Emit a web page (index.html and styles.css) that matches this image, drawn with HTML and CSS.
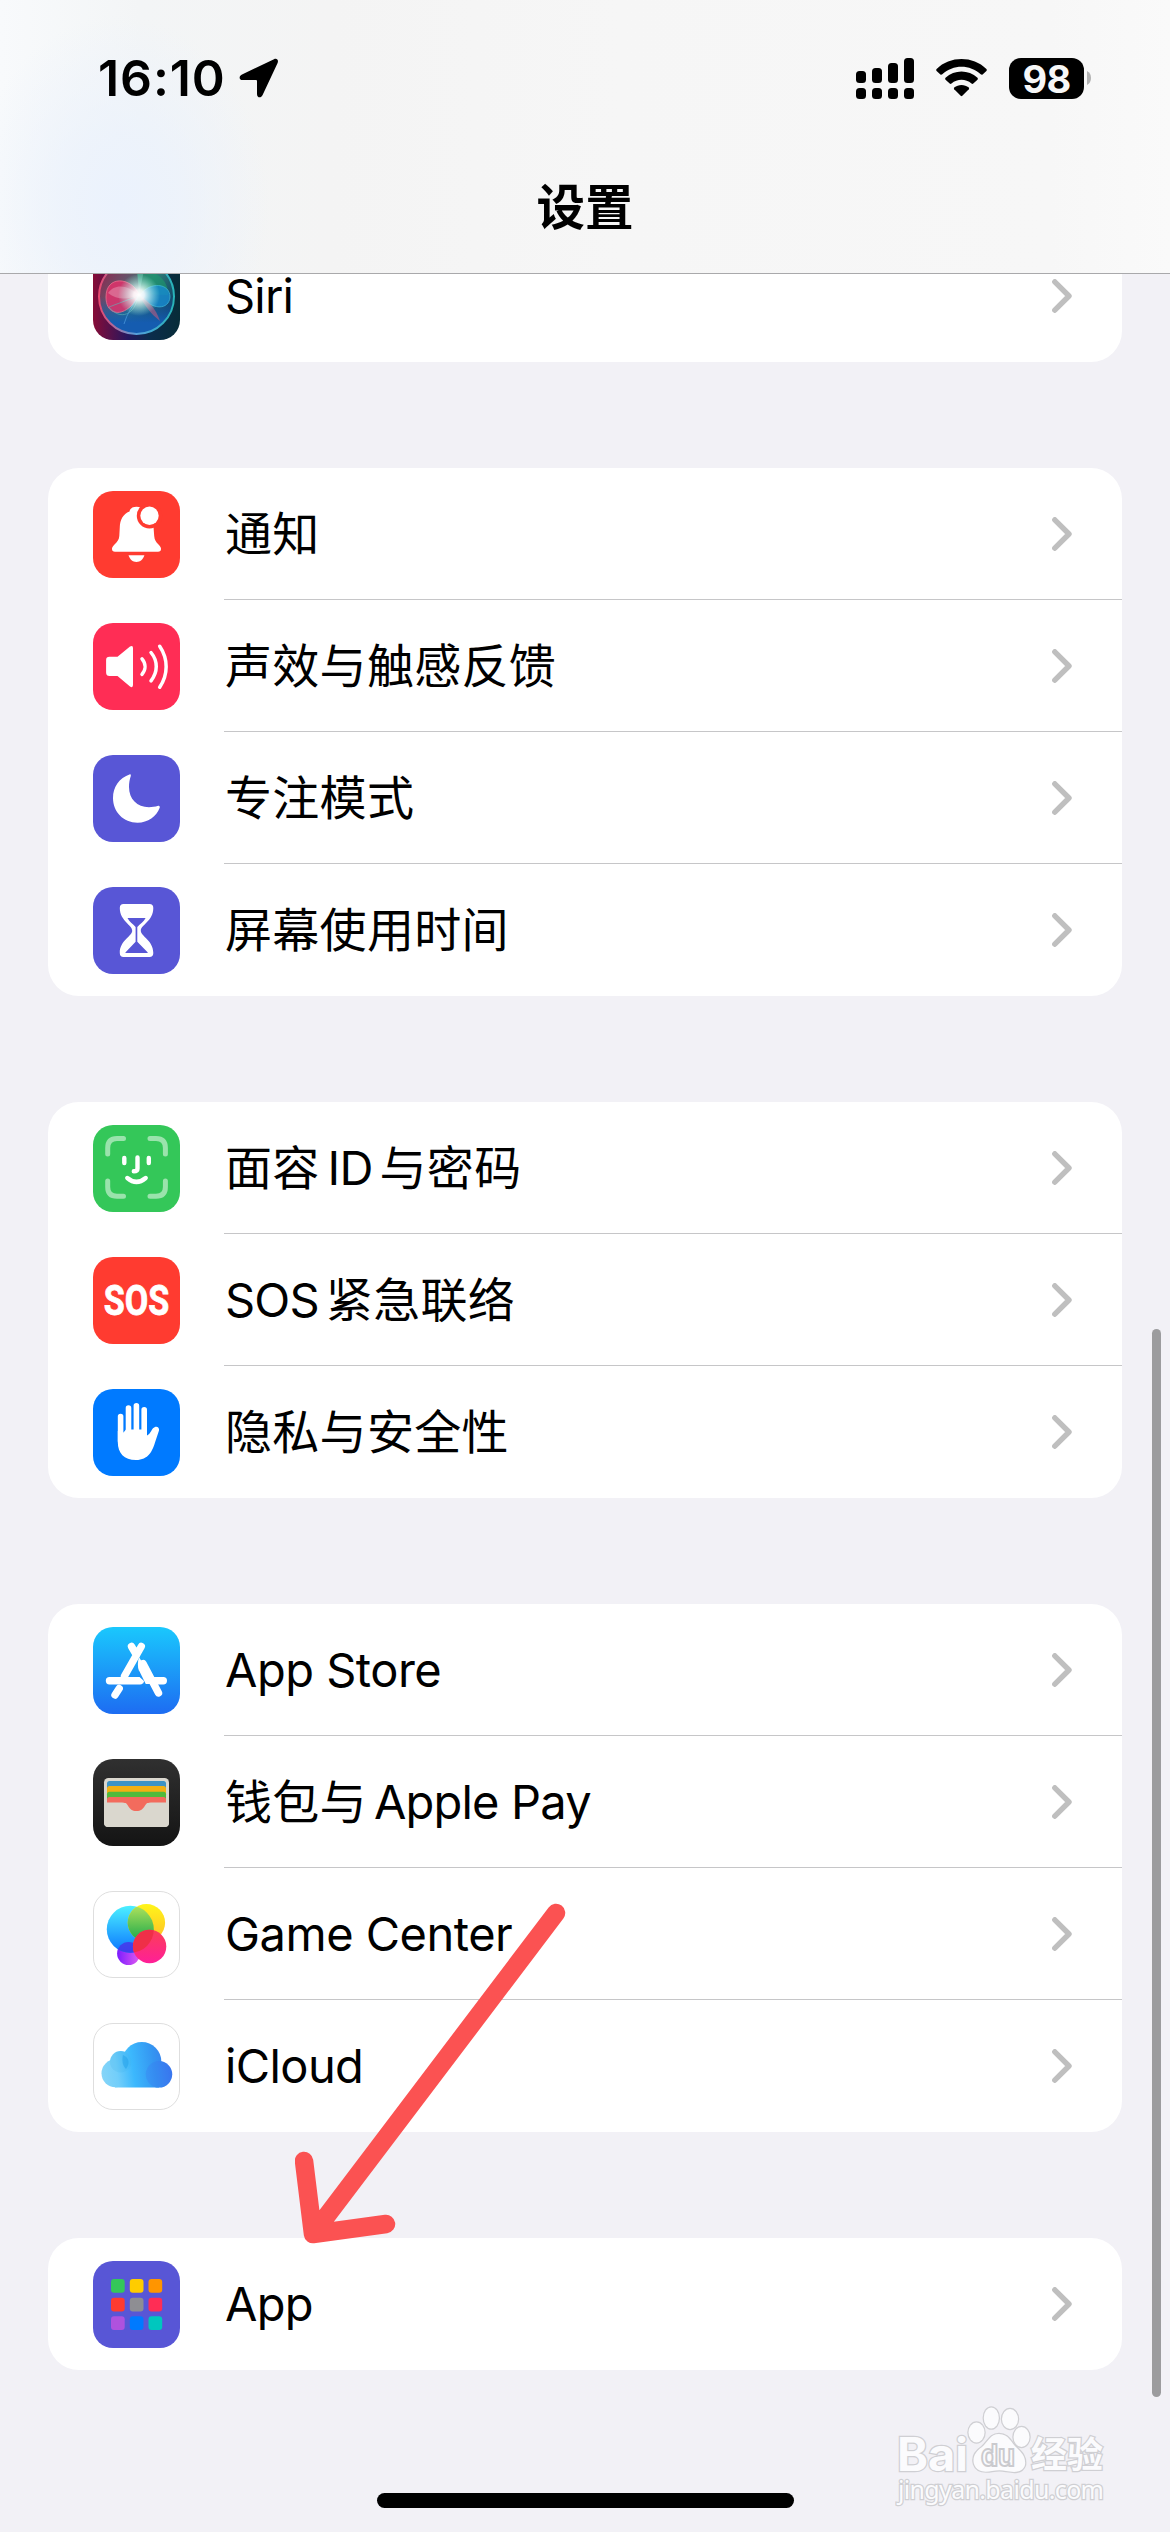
FILE: index.html
```html
<!DOCTYPE html>
<html lang="zh-CN">
<head>
<meta charset="utf-8">
<title>设置</title>
<link rel="stylesheet" href="styles.css">
</head>
<body>
<svg class="defs" aria-hidden="true">
  <symbol id="chevron" viewBox="0 0 20 34"><path d="M2.8 2.8 17 17 2.8 31.2" fill="none" stroke="#bfbfbf" stroke-width="5.4" stroke-linecap="round" stroke-linejoin="round"/></symbol>
</svg>
<div class="screen">
  <header class="navbar">
    <div class="status">
      <div class="status-left">
        <span class="time">16:10</span>
        <svg class="location" viewBox="0 0 40 40"><path d="M35 1.2 3 16.6C-.8 18.6.4 22 3.6 22H17Q18 22 18 23V36C18 40 22 40.5 23.6 37L38.600 5C39.800 2 37.800 0 35 1.200Z"/></svg>
      </div>
      <div class="status-right">
        <svg class="signal" viewBox="0 0 58 41">
          <rect x="0" y="13" width="10" height="12" rx="3.500"/><rect x="16" y="10" width="10" height="15" rx="3.500"/><rect x="32" y="5" width="10" height="20" rx="3.500"/><rect x="48" y="0" width="10" height="25" rx="3.500"/>
          <rect x="0" y="30" width="10" height="11" rx="3.500"/><rect x="16" y="30" width="10" height="11" rx="3.500"/><rect x="32" y="30" width="10" height="11" rx="3.500"/><rect x="48" y="30" width="10" height="11" rx="3.500"/>
        </svg>
        <svg class="wifi" viewBox="0 0 51 38">
          <path d="M.6 10C14-3.300 37-3.300 50.400 10Q51.200 11 50.400 12L46.600 15.500Q45.600 16 44.700 15.200C34 5.200 17 5.200 6.300 15.200Q5.400 16 4.400 15.500L.6 12Q-.2 11 .6 10Z"/>
          <path d="M9.500 18.800C18.500 10.300 32.500 10.300 41.500 18.800Q42.300 19.800 41.500 20.700L37.300 24.600Q36.400 25.300 35.500 24.500C29.700 19.500 21.300 19.500 15.500 24.500Q14.600 25.300 13.700 24.600L9.500 20.700Q8.700 19.800 9.500 18.800Z"/>
          <path d="M18.200 28.500C22.400 25 28.600 25 32.800 28.500Q33.500 29.400 32.800 30.200L26.300 36.800Q25.500 37.500 24.700 36.800L18.200 30.200Q17.500 29.400 18.200 28.500Z"/>
        </svg>
        <div class="battery"><span class="battery-level">98</span><svg class="battery-nub" viewBox="0 0 4 14"><path d="M0 0Q4 2 4 7T0 14Z" fill="#b2b2b2"/></svg></div>
      </div>
    </div>
    <h1 class="title">设置</h1>
  </header>

  <main class="groups">
    <section class="card card-scrolled">
      <a class="row">
        <svg class="icon" viewBox="0 0 87 87">
          <defs>
            <linearGradient id="siriBg" x1="0" x2="1" y1=".6" y2=".6"><stop offset="0" stop-color="#870c37"/><stop offset=".4" stop-color="#26175e"/><stop offset=".65" stop-color="#0b2c4c"/><stop offset="1" stop-color="#072c38"/></linearGradient>
            <linearGradient id="siriOrb" x1="0" x2="1" y1="0" y2=".7"><stop offset="0" stop-color="#9a1846"/><stop offset=".35" stop-color="#6a5068"/><stop offset=".6" stop-color="#2f7f78"/><stop offset="1" stop-color="#0a3764"/></linearGradient>
            <linearGradient id="siriRing" x1="0" x2="1"><stop offset="0" stop-color="#e8486f"/><stop offset=".5" stop-color="#55a0dc"/><stop offset="1" stop-color="#28b3b8"/></linearGradient>
            <linearGradient id="siriLow" x1="0" x2="0" y1="0" y2="1"><stop offset=".5" stop-color="#1457a5" stop-opacity="0"/><stop offset=".85" stop-color="#155cb0"/></linearGradient>
            <radialGradient id="siriGlow"><stop offset="0" stop-color="#fff"/><stop offset=".25" stop-color="#fff" stop-opacity=".9"/><stop offset="1" stop-color="#a8fff0" stop-opacity="0"/></radialGradient>
          </defs>
          <rect width="87" height="87" rx="20" fill="url(#siriBg)"/>
          <circle cx="43.500" cy="43.500" r="37.500" fill="url(#siriOrb)"/>
          <circle cx="43.500" cy="43.500" r="37.500" fill="url(#siriLow)" stroke="url(#siriRing)" stroke-width="2"/>
          <path d="M44 20C58 14 76 25 75 42L48 41Z" fill="#1d9b6c" opacity=".6"/>
          <path d="M46 41C38 24 13 22 13 44C13 66 36 64 46 41Z" fill="#e0326c" opacity=".85" stroke="#ff7796" stroke-width=".8"/>
          <path d="M46 42C35 32 22 30 15 40C25 48 36 46 46 42Z" fill="#fff" opacity=".25"/>
          <path d="M16 54C27 68 42 62 45 43Z" fill="none" stroke="#5db4b8" opacity=".6"/>
          <path d="M47 42C57 28 77 30 77 44C76 57 59 58 47 42Z" fill="#178bd1" opacity=".8" stroke="#43c4e8" stroke-width=".8"/>
          <path d="M45 43C40 53 34 60 31 71" stroke="#4f9ce0" fill="none" opacity=".7"/>
          <path d="M47 43C56 48 63 56 67 68C58 61 51 52 47 43Z" fill="#a25b86" opacity=".7"/>
          <path d="M46 42 44 16 51 17Z" fill="#8ce0cf" opacity=".35"/>
          <circle cx="46" cy="42" r="21" fill="url(#siriGlow)"/>
        </svg>
        <span class="row-body"><span class="label siri">Siri</span><svg class="chevron"><use href="#chevron"/></svg></span>
      </a>
    </section>

    <section class="card">
      <a class="row">
        <svg class="icon" viewBox="0 0 87 87">
          <rect width="87" height="87" rx="20" fill="#ff3b30"/>
          <path d="M43.500 15.700C39.500 15.700 37 17.500 36.500 20.500 30 23 27 29 26.800 36L26.300 45C26 49 24 51 21.500 53.500 19.300 55.800 19 56.800 19 58Q19 60.700 22 60.700H65Q68 60.700 68 58C68 56.800 67.700 55.800 65.500 53.500 63 51 61.500 49 61.200 45L60.600 37C60 29 56 23 50.500 20.500 50 18 48 15.700 43.500 15.700Z" fill="#fff"/>
          <circle cx="56.500" cy="24.700" r="12.700" fill="#ff3b30"/><circle cx="56.500" cy="24.700" r="9.200" fill="#fff"/>
          <path d="M35.500 64.300H51.400C50 68.500 47.300 71 43.400 71S37 68.500 35.500 64.300Z" fill="#fff"/>
        </svg>
        <span class="row-body"><span class="label">通知</span><svg class="chevron"><use href="#chevron"/></svg></span>
      </a>
      <a class="row">
        <svg class="icon" viewBox="0 0 87 87">
          <rect width="87" height="87" rx="20" fill="#ff2d55"/>
          <path d="M13.100 37Q13.100 33.700 16.500 33.700H24.500L37 23.600Q40 22 40 25V62Q40 65.200 37 63.600L24.500 53H16.500Q13.100 53 13.100 49.500Z" fill="#fff"/>
          <path d="M49 35.800C53 40.500 53 46.500 49 51.300M58 29.500C65 38 65 49 58 57.800M66.700 23.300C75.300 36 75.300 51.500 66.700 64.200" fill="none" stroke="#fff" stroke-width="3.500" stroke-linecap="round"/>
        </svg>
        <span class="row-body"><span class="label">声效与触感反馈</span><svg class="chevron"><use href="#chevron"/></svg></span>
      </a>
      <a class="row">
        <svg class="icon" viewBox="0 0 87 87">
          <rect width="87" height="87" rx="20" fill="#5856d6"/>
          <path d="M37 19.200C26 23 20 32 20 43 20 57 30.500 67.700 44.500 67.700 55 67.700 63.500 61.500 66.800 52.500Q67 50.500 65.300 50.800C62 51.800 59 52.200 56 52.200 44 52.200 36 44 36 32 36 28 36.500 25 37.800 21Q38.200 19 37 19.200Z" fill="#fff"/>
        </svg>
        <span class="row-body"><span class="label">专注模式</span><svg class="chevron"><use href="#chevron"/></svg></span>
      </a>
      <a class="row">
        <svg class="icon" viewBox="0 0 87 87">
          <rect width="87" height="87" rx="20" fill="#5856d6"/>
          <path d="M30.500 17H56.500Q60.300 17 60.300 21C60.300 34 47.800 38 47.800 43.700S60.300 53 60.300 66Q60.300 70 56.500 70H30.500Q26.800 70 26.800 66C26.800 53 39.200 49.500 39.200 43.700S26.800 34 26.800 21Q26.800 17 30.500 17Z" fill="#fff"/>
          <path d="M34.500 31H52.600C51 34.500 47 37 44.300 40V54.800L54.800 65.500Q54.500 66 54 66H33Q32.400 66 32.400 65.500L42.600 54.800V40C40 37 36 34.500 34.500 31Z" fill="#5856d6"/>
        </svg>
        <span class="row-body"><span class="label">屏幕使用时间</span><svg class="chevron"><use href="#chevron"/></svg></span>
      </a>
    </section>

    <section class="card">
      <a class="row">
        <svg class="icon" viewBox="0 0 87 87">
          <rect width="87" height="87" rx="20" fill="#34c759"/>
          <path d="M14.700 29V23Q14.700 13.500 24 13.500H30.500M57 13.500H63Q72.400 13.500 72.400 23V29M72.400 56V62Q72.400 71.300 63 71.300H57M30.500 71.300H24Q14.700 71.300 14.700 62V56" fill="none" stroke="#9ae3ac" stroke-width="5" stroke-linecap="round"/>
          <path d="M31.300 33V38M55.800 33V38M44.500 32.500V43.500Q44.500 46.300 40.800 46.300M34.300 53Q43.500 60.800 52.700 53" fill="none" stroke="#fff" stroke-width="4.400" stroke-linecap="round"/>
        </svg>
        <span class="row-body"><span class="label">面容<span class="mix mix-id">ID</span>与密码</span><svg class="chevron"><use href="#chevron"/></svg></span>
      </a>
      <a class="row">
        <svg class="icon" viewBox="0 0 87 87">
          <rect width="87" height="87" rx="20" fill="#ff3b30"/>
          <text class="sos" x="10.800" y="58.300" textLength="65.500" lengthAdjust="spacingAndGlyphs">SOS</text>
        </svg>
        <span class="row-body"><span class="label"><span class="mix mix-sos">SOS</span>紧急联络</span><svg class="chevron"><use href="#chevron"/></svg></span>
      </a>
      <a class="row">
        <svg class="icon" viewBox="0 0 87 87">
          <rect width="87" height="87" rx="20" fill="#007aff"/>
          <path d="M27.600 27.500V52M35.500 19V50M43.400 16.800V50M51.200 20.800V50" stroke="#fff" stroke-width="5.600" stroke-linecap="round"/>
          <path d="M24.800 42 30.500 43.500 33 40.500H49L54 46.500C56.500 46 58.500 41 60 39.300 62.500 36.500 66.700 37.500 66 41.500L62.500 52C59.500 62 55.500 71 43 71 31 71 24.800 64 24.800 53Z" fill="#fff"/>
        </svg>
        <span class="row-body"><span class="label">隐私与安全性</span><svg class="chevron"><use href="#chevron"/></svg></span>
      </a>
    </section>

    <section class="card">
      <a class="row">
        <svg class="icon" viewBox="0 0 87 87">
          <defs><linearGradient id="store" x1="0" x2="0" y1="0" y2="1"><stop offset="0" stop-color="#1ac8fd"/><stop offset="1" stop-color="#1d6cf2"/></linearGradient></defs>
          <rect width="87" height="87" rx="20" fill="url(#store)"/>
          <g fill="none" stroke="#fff" stroke-width="7.400" stroke-linecap="round">
            <path d="M38.500 19.500 43.500 28M48.300 19.500 31.500 49"/>
            <path d="M26.200 61.500 22 68"/>
            <path d="M16.500 53.700H47M61 53.700H70.300"/>
            <path d="M50 36.500 65.500 66"/>
          </g>
          <path d="M46 30 53 42 61 57H51L45.800 44C44.500 39 44.600 35 46 30Z" fill="#fff"/>
          <path d="M45.300 42 55.500 62.500 50.500 57.500 51 54 46 49.500Z" fill="#1992f7"/>
        </svg>
        <span class="row-body"><span class="label store">App Store</span><svg class="chevron"><use href="#chevron"/></svg></span>
      </a>
      <a class="row">
        <svg class="icon" viewBox="0 0 87 87">
          <defs><linearGradient id="leather" x1="0" x2="0" y1="0" y2="1"><stop offset="0" stop-color="#303030"/><stop offset="1" stop-color="#141414"/></linearGradient></defs>
          <rect width="87" height="87" rx="20" fill="url(#leather)"/>
          <rect x="11" y="19" width="65" height="49" rx="4.500" fill="#dad7ce"/>
          <path d="M14 44V24.500Q14 22 16.500 22H70.500Q73 22 73 24.500V44Z" fill="#3c93c6"/>
          <path d="M14 44V29.500Q14 27 16.500 27H70.500Q73 27 73 29.500V44Z" fill="#f2b013"/>
          <path d="M14 44V35.200Q14 32.700 16.500 32.700H70.500Q73 32.700 73 35.200V44Z" fill="#50bb3c"/>
          <path d="M14 44V40.500Q14 38 16.500 38H70.500Q73 38 73 40.500V44Z" fill="#f36b5d"/>
          <path d="M11 43.500H29C36 43.500 34.500 52 43.500 52S51 43.500 58 43.500H76V64Q76 68 72 68H15Q11 68 11 64Z" fill="#dad7ce"/>
          <path d="M30 43C36 43.500 34.500 52 43.500 52S51 43.500 57 43Z" fill="#f36b5d"/>
        </svg>
        <span class="row-body"><span class="label">钱包与<span class="mix mix-pay">Apple Pay</span></span><svg class="chevron"><use href="#chevron"/></svg></span>
      </a>
      <a class="row">
        <svg class="icon" viewBox="0 0 87 87">
          <defs>
            <linearGradient id="gcBlue" x1="0" x2="0" y1="0" y2="1"><stop offset="0" stop-color="#4cf0ff"/><stop offset="1" stop-color="#0a75ff"/></linearGradient>
            <linearGradient id="gcYellow" x1="0" x2="0" y1="0" y2="1"><stop offset="0" stop-color="#fff51a"/><stop offset="1" stop-color="#ffbe28"/></linearGradient>
            <linearGradient id="gcGreen" x1="0" x2="0" y1="0" y2="1"><stop offset="0" stop-color="#b6e45c"/><stop offset="1" stop-color="#1aa84b"/></linearGradient>
            <linearGradient id="gcPink" x1="0" x2="0" y1="0" y2="1"><stop offset="0" stop-color="#fb3f55"/><stop offset="1" stop-color="#ff1f98"/></linearGradient>
            <linearGradient id="gcPurple" x1="0" x2="1"><stop offset="0" stop-color="#7b1cff"/><stop offset="1" stop-color="#e35cf0"/></linearGradient>
            <clipPath id="gcClip"><circle cx="37.300" cy="38.300" r="23.500"/></clipPath>
          </defs>
          <rect x=".5" y=".5" width="86" height="86" rx="19.500" fill="#fff" stroke="#dedede"/>
          <circle cx="35.600" cy="62.500" r="11.500" fill="url(#gcPurple)"/>
          <circle cx="37.300" cy="38.300" r="23.500" fill="url(#gcBlue)"/>
          <circle cx="53.400" cy="31.700" r="18.700" fill="url(#gcYellow)"/>
          <g clip-path="url(#gcClip)"><circle cx="53.400" cy="31.700" r="18.700" fill="url(#gcGreen)"/><circle cx="35.600" cy="62.500" r="11.500" fill="#4a30e8" opacity=".8"/></g>
          <circle cx="56.600" cy="55.500" r="16.700" fill="url(#gcPink)"/>
          <g clip-path="url(#gcClip)"><circle cx="56.600" cy="55.500" r="16.700" fill="#ef2f48"/></g>
        </svg>
        <span class="row-body"><span class="label game">Game Center</span><svg class="chevron"><use href="#chevron"/></svg></span>
      </a>
      <a class="row">
        <svg class="icon" viewBox="0 0 87 87">
          <defs>
            <linearGradient id="cloud" gradientUnits="userSpaceOnUse" x1="8" x2="79" y1="50" y2="40"><stop offset="0" stop-color="#86d5f8"/><stop offset=".22" stop-color="#72cefa"/><stop offset=".45" stop-color="#3cb8fd"/><stop offset=".75" stop-color="#3495f1"/><stop offset="1" stop-color="#3a78ee"/></linearGradient>
          </defs>
          <rect x=".5" y=".5" width="86" height="86" rx="19.500" fill="#fff" stroke="#dedede"/>
          <g fill="url(#cloud)"><circle cx="27.700" cy="38.700" r="10.700"/><circle cx="22.500" cy="50.300" r="14"/><circle cx="48.800" cy="38.500" r="19.500"/><circle cx="66" cy="51.300" r="13.200"/><path d="M22 64.400H66V45H22Z"/></g>
          <circle cx="27.700" cy="38.700" r="10.700" fill="#38b0e8" opacity=".16"/>
          <path d="M30 32C35 34 38 39 33 46 29 42 29 37 30 32Z" fill="#1a9be6" opacity=".45"/>
          <circle cx="66" cy="51.300" r="13.200" fill="#3b63ee" opacity=".2"/>
        </svg>
        <span class="row-body"><span class="label cloud">iCloud</span><svg class="chevron"><use href="#chevron"/></svg></span>
      </a>
    </section>

    <section class="card">
      <a class="row">
        <svg class="icon" viewBox="0 0 87 87">
          <rect width="87" height="87" rx="20" fill="#5856d6"/>
          <rect x="18" y="18" width="13.700" height="13.700" rx="3" fill="#34c759"/><rect x="36.800" y="18" width="13.700" height="13.700" rx="3" fill="#ffcc00"/><rect x="55.500" y="18" width="13.700" height="13.700" rx="3" fill="#ff9500"/>
          <rect x="18" y="36.800" width="13.700" height="13.700" rx="3" fill="#ff3b30"/><rect x="36.800" y="36.800" width="13.700" height="13.700" rx="3" fill="#8e8e93"/><rect x="55.500" y="36.800" width="13.700" height="13.700" rx="3" fill="#ff2d55"/>
          <rect x="18" y="55.300" width="13.700" height="13.700" rx="3" fill="#af52de"/><rect x="36.800" y="55.300" width="13.700" height="13.700" rx="3" fill="#007aff"/><rect x="55.500" y="55.300" width="13.700" height="13.700" rx="3" fill="#00c7be"/>
        </svg>
        <span class="row-body"><span class="label apps">App</span><svg class="chevron"><use href="#chevron"/></svg></span>
      </a>
    </section>
  </main>

  <div class="scrollbar"></div>
  <svg class="arrow" viewBox="0 0 280 350"><path d="M261 13 18 334M9 261 18 334 91 324" fill="none" stroke="#fb5252" stroke-width="18.500" stroke-linecap="round" stroke-linejoin="round"/></svg>

  <svg class="watermark" viewBox="0 0 220 110">
    <g class="mark">
      <text class="mark-name" x="2" y="66" textLength="71" lengthAdjust="spacingAndGlyphs">Bai</text>
      <ellipse cx="81.500" cy="27.500" rx="8" ry="10"/><ellipse cx="96.300" cy="13" rx="7.500" ry="10.500"/><ellipse cx="115" cy="14" rx="8" ry="10"/><ellipse cx="126.500" cy="32" rx="8" ry="10"/>
      <path d="M104 29C95 29 93 37 87 42 81 46 77 52 79 59 82 68 91 67 97 66 102 65 107 65 111 66 117 67 127 69 130 60 131 52 127 48 122 43 116 38 114 29 104 29Z"/>
      <text class="mark-name mark-cn" x="136" y="63" textLength="72">经验</text>
      <text class="mark-url" x="3" y="94" textLength="206">jingyan.baidu.com</text>
    </g>
    <text class="mark-du" x="86" y="61" textLength="34" lengthAdjust="spacingAndGlyphs">du</text>
  </svg>
  <div class="home-indicator"></div>
</div>
</body>
</html>
```
FILE: styles.css
```css
* { box-sizing: border-box; }
body {
  margin: 0;
  background: #f2f1f6;
  color: #000;
  font-family: Inter, "Noto Sans CJK SC", sans-serif;
}
.defs { position: absolute; width: 0; height: 0; }
.screen {
  position: relative;
  width: 1170px;
  height: 2532px;
  overflow: hidden;
  background: #f2f1f6;
}

/* Status bar and title */
.navbar {
  height: 274px;
  border-bottom: 1px solid #a9a9ab;
  background:
    radial-gradient(ellipse 150px 190px at 120px 205px, #ebf2fd 0, #ebf2fcc0 40%, #ebf2fc00 100%),
    linear-gradient(90deg, #f8fafc 0, #f3f5f6 140px, #f4f4f4 330px, #f6f6f6 620px, #f7f7f7 1050px, #fafafa 1170px);
}
.status {
  display: flex;
  justify-content: space-between;
  align-items: center;
  height: 156px;
  padding: 0 79px 0 98px;
}
.status-left { display: flex; align-items: center; gap: 14px; }
.time { width: 127px; font-size: 50px; font-weight: 600; letter-spacing: .9px; white-space: nowrap; }
.location { width: 40px; height: 40px; }
.status-right { display: flex; align-items: center; }
.signal { width: 58px; height: 41px; }
.wifi { width: 51px; height: 38px; margin-left: 22px; }
.battery { display: flex; align-items: center; margin-left: 22px; gap: 3px; }
.battery-level {
  width: 75px;
  height: 41px;
  border-radius: 12px;
  background: #000;
  color: #f7f7f7;
  font-size: 38px;
  font-weight: 700;
  letter-spacing: -.6px;
  line-height: 42px;
  text-align: center;
}
.battery-nub { width: 4px; height: 14px; }
.title {
  margin: 0;
  padding-top: 16px;
  font-size: 48.500px;
  font-weight: 600;
  line-height: 72px;
  text-align: center;
}

/* Grouped list */
.groups { display: flex; flex-direction: column; gap: 106px; padding: 0 48px; }
.card { overflow: hidden; border-radius: 31px; background: #fff; }
.card-scrolled {
  display: flex;
  flex-direction: column;
  justify-content: flex-end;
  height: 88px;
  border-radius: 0 0 31px 31px;
}
.row { display: flex; flex: none; align-items: center; gap: 44px; height: 132px; padding-left: 45px; }
.icon { width: 87px; height: 87px; }
.row-body {
  display: flex;
  flex: 1;
  align-items: center;
  justify-content: space-between;
  height: 132px;
  padding: 1px 50px 0 1px;
  border-bottom: 1px solid #c6c6c8;
}
.row:last-child .row-body { border-bottom-color: transparent; }
.label { font-size: 47px; letter-spacing: .3px; line-height: 68px; white-space: nowrap; }
.chevron { width: 20px; height: 34px; }
.siri { letter-spacing: -.8px; }
.store { letter-spacing: -.5px; }
.game { letter-spacing: -.5px; }
.cloud { letter-spacing: -.6px; }
.apps { letter-spacing: -.7px; }
.mix-id { margin: 0 7px 0 8px; letter-spacing: -.8px; }
.mix-sos { margin-right: 7px; letter-spacing: -.8px; }
.mix-pay { margin-left: 7px; letter-spacing: -.8px; }
.sos { fill: #fff; stroke: #fff; stroke-width: .8px; font: 700 42px Roboto, sans-serif; }

/* Overlays */
.scrollbar {
  position: absolute;
  top: 1329px;
  right: 9px;
  width: 9px;
  height: 1068px;
  border-radius: 5px;
  background: #9c9c9e;
}
.arrow { position: absolute; left: 295px; top: 1900px; width: 280px; height: 350px; }
.watermark { position: absolute; left: 895px; top: 2405px; width: 220px; height: 110px; }
.mark { fill: #fbfbfd; stroke: #cfcfd3; stroke-width: 2.500px; paint-order: stroke; }
.mark-name { font: 700 46px Inter, sans-serif; }
.mark-cn { font: 700 36px "Noto Sans CJK SC", sans-serif; }
.mark-url { font: 400 25px "Noto Sans", sans-serif; }
.mark-du { fill: #fbfbfd; stroke: #cacace; stroke-width: 2px; font: 700 30px Inter, sans-serif; }
.home-indicator {
  position: absolute;
  bottom: 24px;
  left: 377px;
  width: 417px;
  height: 15px;
  border-radius: 8px;
  background: #000;
}
```
